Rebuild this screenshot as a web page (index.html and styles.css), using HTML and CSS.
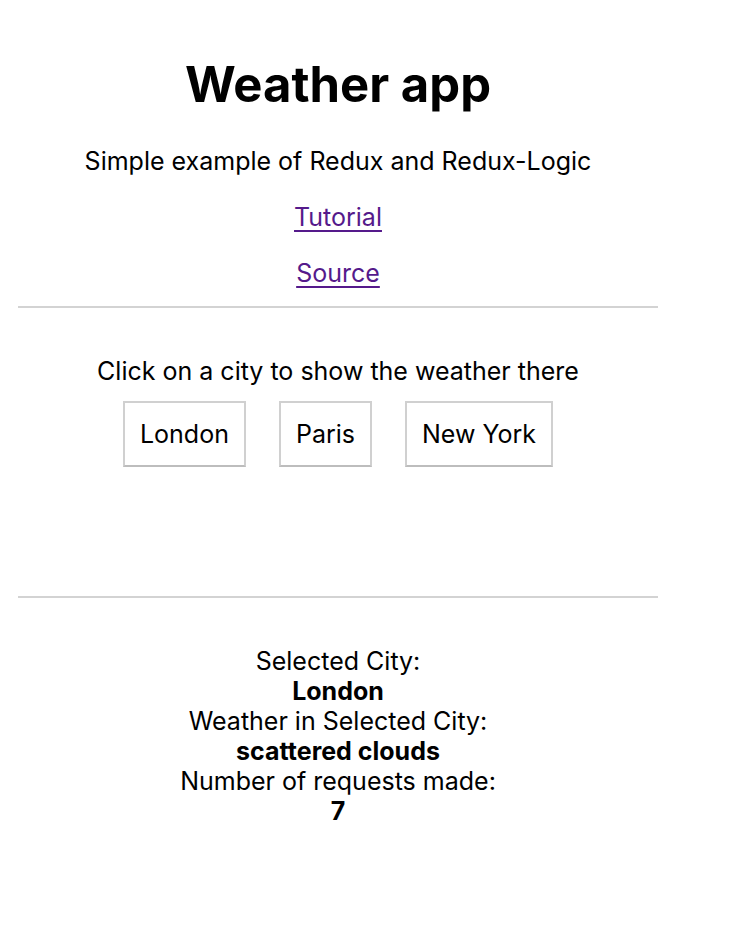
FILE: index.html
```html
<!DOCTYPE html>
<html>
<head>
<meta charset="utf-8">
<link rel="stylesheet" href="styles.css">
</head>
<body>
<div class="app">
  <header class="header">
    <h1 class="title">Weather app</h1>
    <p class="subtitle">Simple example of Redux and Redux-Logic</p>
    <p class="link-row"><a href="#" class="link">Tutorial</a></p>
    <p class="link-row"><a href="#" class="link">Source</a></p>
  </header>
  <hr class="rule">
  <section class="cities">
    <p class="prompt">Click on a city to show the weather there</p>
    <div class="buttons">
      <button class="city">London</button>
      <button class="city">Paris</button>
      <button class="city">New York</button>
    </div>
  </section>
  <hr class="rule">
  <section class="stats">
    <div>Selected City:</div>
    <div class="value">London</div>
    <div>Weather in Selected City:</div>
    <div class="value">scattered clouds</div>
    <div>Number of requests made:</div>
    <div class="value">7</div>
  </section>
</div>
</body>
</html>
```
FILE: styles.css
```css
html, body {
  margin: 0;
  padding: 0;
  background: #ffffff;
}
body {
  font-family: Inter, "Noto Sans", sans-serif;
  font-size: 25px;
  color: #000;
}
.app {
  width: 640px;
  margin-left: 18px;
  text-align: center;
}
.header {
  padding-top: 50px;
}
.title {
  font-size: 49px;
  font-weight: 700;
  margin: 0;
  line-height: 70px;
}
.subtitle {
  margin: 26px 0 0;
  line-height: 30px;
}
.link-row {
  margin: 26px 0 0;
  line-height: 30px;
}
.link {
  color: #551a8b;
  text-decoration: underline;
  text-underline-offset: 4px;
  text-decoration-thickness: 2px;
}
.rule {
  border: 0;
  height: 2px;
  background: #d3d3d3;
  margin: 18px 0 0;
}
.cities {
  height: 222px;
}
.prompt {
  margin: 48px 0 0;
  line-height: 30px;
}
.buttons {
  display: flex;
  justify-content: center;
  gap: 33px;
  margin-top: 15px;
}
.city {
  font-family: Inter, "Noto Sans", sans-serif;
  font-size: 25px;
  color: #000;
  background: #fff;
  border: 2px solid #d0d0d0;
  border-bottom-color: #bdbdbd;
  padding: 16px 15px;
  line-height: 30px;
  cursor: pointer;
  border-radius: 0;
}
.stats {
  padding-top: 48px;
  line-height: 30px;
}
.value {
  font-weight: 700;
}
```
